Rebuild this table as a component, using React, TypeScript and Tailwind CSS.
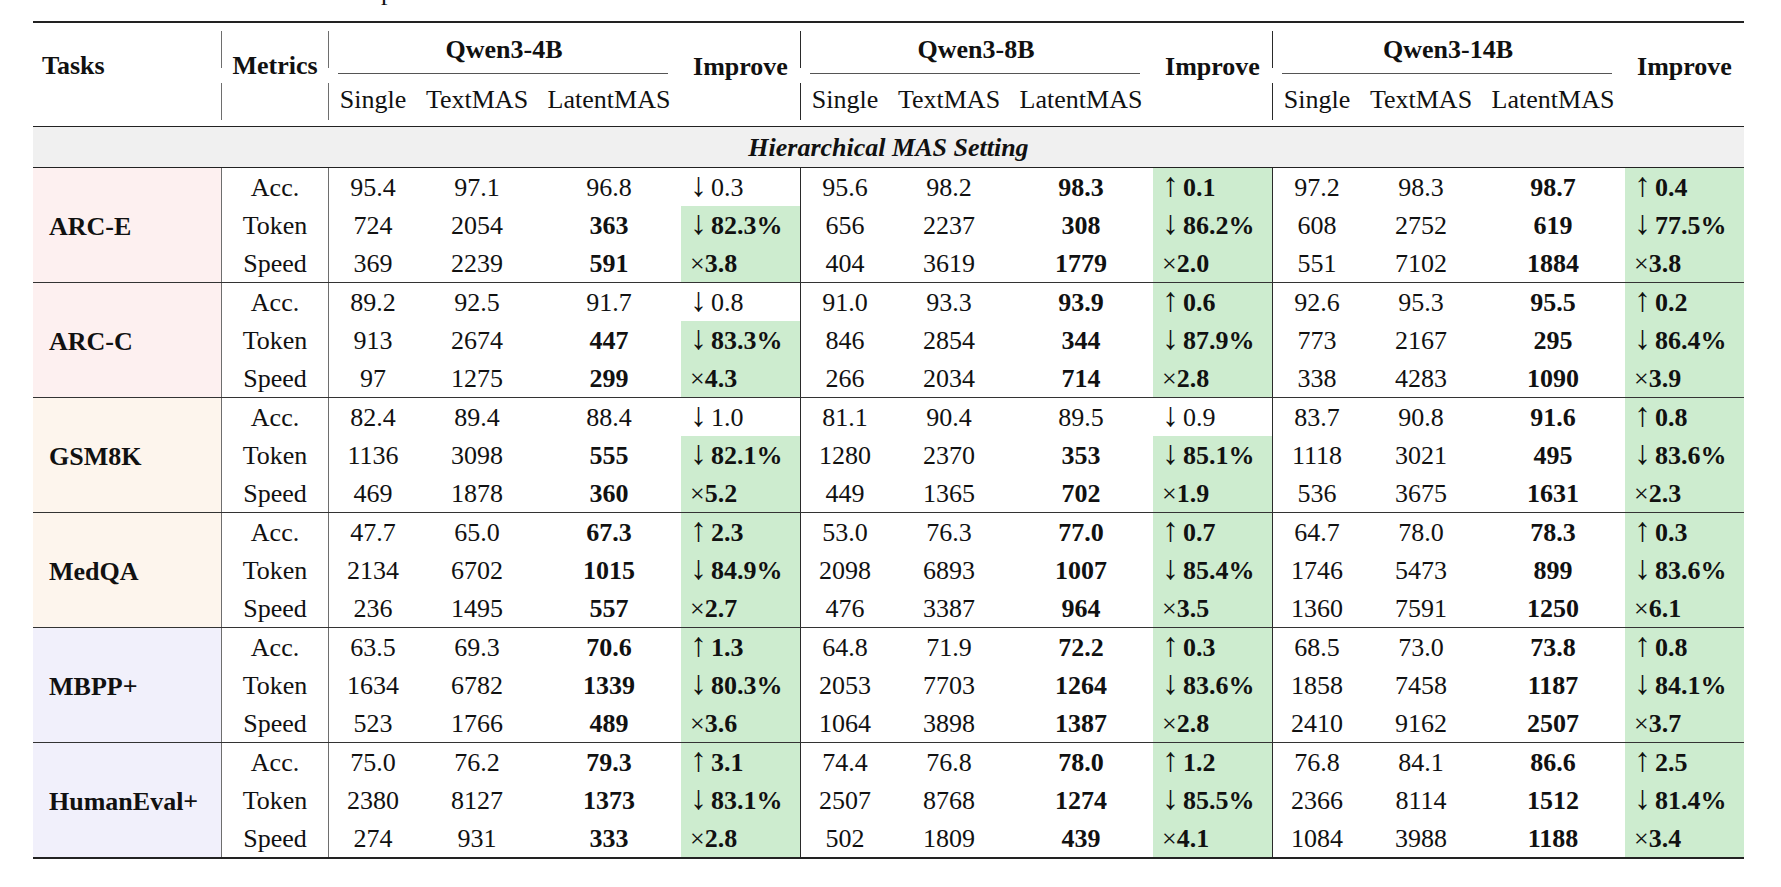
import clsx from "clsx";

type Model = [string, string, string, string, boolean]; // single, textmas, latentmas, improve, highlighted
type Row = { metric: string; m: Model[] };
type Group = { task: string; bg: string; rows: Row[] };

const GROUPS: Group[] = [
  {
    task: "ARC-E",
    bg: "bg-[#fdf0f0]",
    rows: [
      { metric: "Acc.", m: [["95.4", "97.1", "96.8", "↓0.3", false], ["95.6", "98.2", "98.3", "↑0.1", true], ["97.2", "98.3", "98.7", "↑0.4", true]] },
      { metric: "Token", m: [["724", "2054", "363", "↓82.3%", true], ["656", "2237", "308", "↓86.2%", true], ["608", "2752", "619", "↓77.5%", true]] },
      { metric: "Speed", m: [["369", "2239", "591", "×3.8", true], ["404", "3619", "1779", "×2.0", true], ["551", "7102", "1884", "×3.8", true]] },
    ],
  },
  {
    task: "ARC-C",
    bg: "bg-[#fdf0f0]",
    rows: [
      { metric: "Acc.", m: [["89.2", "92.5", "91.7", "↓0.8", false], ["91.0", "93.3", "93.9", "↑0.6", true], ["92.6", "95.3", "95.5", "↑0.2", true]] },
      { metric: "Token", m: [["913", "2674", "447", "↓83.3%", true], ["846", "2854", "344", "↓87.9%", true], ["773", "2167", "295", "↓86.4%", true]] },
      { metric: "Speed", m: [["97", "1275", "299", "×4.3", true], ["266", "2034", "714", "×2.8", true], ["338", "4283", "1090", "×3.9", true]] },
    ],
  },
  {
    task: "GSM8K",
    bg: "bg-[#fdf5ed]",
    rows: [
      { metric: "Acc.", m: [["82.4", "89.4", "88.4", "↓1.0", false], ["81.1", "90.4", "89.5", "↓0.9", false], ["83.7", "90.8", "91.6", "↑0.8", true]] },
      { metric: "Token", m: [["1136", "3098", "555", "↓82.1%", true], ["1280", "2370", "353", "↓85.1%", true], ["1118", "3021", "495", "↓83.6%", true]] },
      { metric: "Speed", m: [["469", "1878", "360", "×5.2", true], ["449", "1365", "702", "×1.9", true], ["536", "3675", "1631", "×2.3", true]] },
    ],
  },
  {
    task: "MedQA",
    bg: "bg-[#fdf5ed]",
    rows: [
      { metric: "Acc.", m: [["47.7", "65.0", "67.3", "↑2.3", true], ["53.0", "76.3", "77.0", "↑0.7", true], ["64.7", "78.0", "78.3", "↑0.3", true]] },
      { metric: "Token", m: [["2134", "6702", "1015", "↓84.9%", true], ["2098", "6893", "1007", "↓85.4%", true], ["1746", "5473", "899", "↓83.6%", true]] },
      { metric: "Speed", m: [["236", "1495", "557", "×2.7", true], ["476", "3387", "964", "×3.5", true], ["1360", "7591", "1250", "×6.1", true]] },
    ],
  },
  {
    task: "MBPP+",
    bg: "bg-[#f1f0fb]",
    rows: [
      { metric: "Acc.", m: [["63.5", "69.3", "70.6", "↑1.3", true], ["64.8", "71.9", "72.2", "↑0.3", true], ["68.5", "73.0", "73.8", "↑0.8", true]] },
      { metric: "Token", m: [["1634", "6782", "1339", "↓80.3%", true], ["2053", "7703", "1264", "↓83.6%", true], ["1858", "7458", "1187", "↓84.1%", true]] },
      { metric: "Speed", m: [["523", "1766", "489", "×3.6", true], ["1064", "3898", "1387", "×2.8", true], ["2410", "9162", "2507", "×3.7", true]] },
    ],
  },
  {
    task: "HumanEval+",
    bg: "bg-[#f1f0fb]",
    rows: [
      { metric: "Acc.", m: [["75.0", "76.2", "79.3", "↑3.1", true], ["74.4", "76.8", "78.0", "↑1.2", true], ["76.8", "84.1", "86.6", "↑2.5", true]] },
      { metric: "Token", m: [["2380", "8127", "1373", "↓83.1%", true], ["2507", "8768", "1274", "↓85.5%", true], ["2366", "8114", "1512", "↓81.4%", true]] },
      { metric: "Speed", m: [["274", "931", "333", "×2.8", true], ["502", "1809", "439", "×4.1", true], ["1084", "3988", "1188", "×3.4", true]] },
    ],
  },
];

const MODELS = ["Qwen3-4B", "Qwen3-8B", "Qwen3-14B"];

// header vertical rule, broken in two pieces like the LaTeX output
function HeadRule({ dark }: { dark?: boolean }) {
  const c = dark ? "bg-[#2a2a2a]" : "bg-[#6e6e6e]";
  return (
    <div className="flex w-px shrink-0 flex-col">
      <div className="h-[8px]" />
      <div className={clsx("h-[37px]", c)} />
      <div className="h-[15px]" />
      <div className={clsx("h-[37px]", c)} />
    </div>
  );
}

function ImproveCell({ t, good }: { t: string; good: boolean }) {
  const sym = t[0];
  const num = t.slice(1);
  return (
    <div className={clsx("h-[38px] w-[119px] pl-[9px] pt-[2px] leading-[35px] whitespace-nowrap", good && "bg-[#cdeccf]")}>
      {sym === "×" ? (
        <span>×</span>
      ) : (
        <span className="inline-block w-[21px] text-[34px] leading-[20px]">{sym}</span>
      )}
      <span className={good ? "font-bold" : ""}>{num}</span>
    </div>
  );
}

export default function App() {
  return (
    <div className="min-h-screen bg-white pl-[33px] text-[26px] text-[#111] font-['Liberation_Serif','DejaVu_Serif',serif]">
      <div className="w-[1711px]">
        {/* tail of the caption line above the table */}
        <div className="h-[21px] overflow-hidden">
          <div className="-mt-[23px] pl-[348px] leading-[30px]">p</div>
        </div>
        <div className="h-[2px] bg-[#222]" />

        {/* header */}
        <div className="flex h-[103px]">
          <div className="w-[188px] pl-[9px] pt-[28px] leading-[30px] font-bold">Tasks</div>
          <div className="flex w-[107px]">
            <HeadRule />
            <div className="flex-1 pt-[28px] text-center leading-[30px] font-bold">Metrics</div>
          </div>
          {MODELS.map((name, i) => (
            <div key={name} className="flex w-[472px]">
              <HeadRule dark={i > 0} />
              <div className="flex w-[352px] flex-col">
                <div className="flex h-[51px] flex-col">
                  <div className="flex-1 pt-[12px] pl-[10px] w-[340px] text-center leading-[30px] font-bold">{name}</div>
                  <div className="ml-[9px] h-px w-[330px] bg-[#555]" />
                </div>
                <div className="flex h-[52px] pt-[11px] leading-[30px]">
                  <div className="w-[88px] text-center">Single</div>
                  <div className="w-[120px] text-center">TextMAS</div>
                  <div className="w-[144px] text-center">LatentMAS</div>
                </div>
              </div>
              <div className="w-[119px] pt-[29px] text-center leading-[30px] font-bold">Improve</div>
            </div>
          ))}
        </div>
        <div className="h-px bg-[#222]" />

        <div className="h-[40px] bg-[#f0f0f0] pt-[6px] text-center leading-[30px] font-bold italic">Hierarchical MAS Setting</div>
        <div className="h-px bg-[#222]" />

        {GROUPS.map((g, gi) => (
          <div
            key={g.task}
            className={clsx(
              "flex",
              gi === GROUPS.length - 1 ? "border-b-2 border-[#222]" : "border-b border-[#333]",
            )}
          >
            <div className={clsx("flex w-[188px] items-center pl-[16px] font-bold", g.bg)}>
              <div className="h-[38px] pt-[3px] leading-[35px]">{g.task}</div>
            </div>
            <div className="w-[107px] border-l border-[#6e6e6e]">
              {g.rows.map((r) => (
                <div key={r.metric} className="h-[38px] pt-[2px] text-center leading-[35px]">
                  {r.metric}
                </div>
              ))}
            </div>
            {MODELS.map((name, mi) => (
              <div key={name} className={clsx("w-[472px] border-l", mi === 0 ? "border-[#6e6e6e]" : "border-[#2a2a2a]")}>
                {g.rows.map((r) => {
                  const [single, text, latent, imp, good] = r.m[mi];
                  return (
                    <div key={r.metric} className="flex h-[38px]">
                      <div className="w-[88px] pt-[2px] text-center leading-[35px]">{single}</div>
                      <div className="w-[120px] pt-[2px] text-center leading-[35px]">{text}</div>
                      <div className={clsx("w-[144px] pt-[2px] text-center leading-[35px]", good && "font-bold")}>{latent}</div>
                      <ImproveCell t={imp} good={good} />
                    </div>
                  );
                })}
              </div>
            ))}
          </div>
        ))}
      </div>
    </div>
  );
}
